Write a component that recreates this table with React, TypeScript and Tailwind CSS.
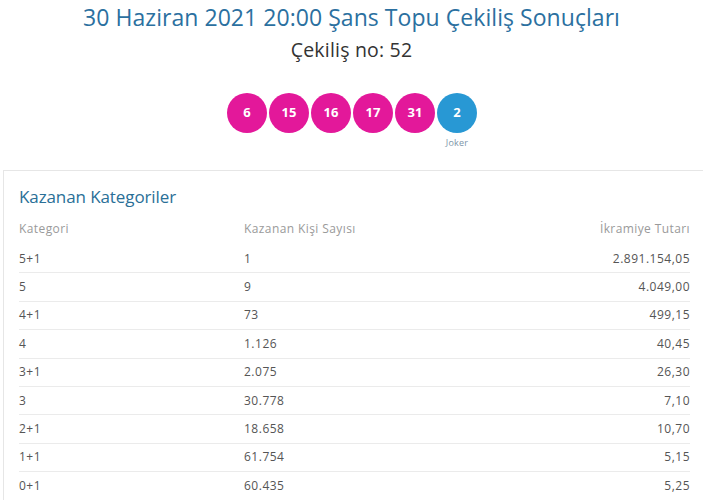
import React from "react";

const rows: [string, string, string][] = [
  ["5+1", "1", "2.891.154,05"],
  ["5", "9", "4.049,00"],
  ["4+1", "73", "499,15"],
  ["4", "1.126", "40,45"],
  ["3+1", "2.075", "26,30"],
  ["3", "30.778", "7,10"],
  ["2+1", "18.658", "10,70"],
  ["1+1", "61.754", "5,15"],
  ["0+1", "60.435", "5,25"],
];

const balls = ["6", "15", "16", "17", "31"];

export default function App() {
  return (
    <div
      className="w-[703px] h-[500px] overflow-hidden bg-white"
      style={{ fontFamily: '"Open Sans", "Noto Sans", sans-serif' }}
    >
      <div className="flex flex-col items-center">
        <h1 className="mt-[2px] text-[23px] leading-[30px] text-[#2b70a0] tracking-[0.05px]">
          30 Haziran 2021 20:00 Şans Topu Çekiliş Sonuçları
        </h1>
        <div className="mt-[4px] text-[19.5px] leading-[28px] text-[#333] tracking-[0.2px]">Çekiliş no: 52</div>
        <div className="mt-[29px] flex gap-[2px] pl-[1px]">
          {balls.map((b) => (
            <div key={b} className="flex flex-col items-center">
              <div className="w-[40px] h-[40px] rounded-full bg-[#e3189a] text-white font-bold text-[13px] flex items-center justify-center">
                {b}
              </div>
            </div>
          ))}
          <div className="flex flex-col items-center">
            <div className="w-[40px] h-[40px] rounded-full bg-[#2898d4] text-white font-bold text-[13px] flex items-center justify-center">
              2
            </div>
            <div className="mt-[4px] text-[9px] leading-[12px] text-[#7c95a8] tracking-[0.2px]">Joker</div>
          </div>
        </div>
      </div>
      <div className="mt-[21px] ml-[3px] border-l border-t border-[#e6e6e6] pl-[15px] pr-[13px] pt-[14px]">
        <div className="text-[17px] leading-[24px] text-[#2a6f97] tracking-[-0.1px]">Kazanan Kategoriler</div>
        <div className="mt-[11px] grid grid-cols-[225px_1fr_auto] text-[12px] leading-[18px] text-[#9a9a9a] pb-[7px] tracking-[0.4px]">
          <div>Kategori</div>
          <div>Kazanan Kişi Sayısı</div>
          <div className="text-right">İkramiye Tutarı</div>
        </div>
        {rows.map((r, i) => (
          <div
            key={r[0]}
            className={
              "grid grid-cols-[225px_1fr_auto] h-[28.4px] items-center text-[12px] text-[#555] tracking-[0.5px] " +
              (i < rows.length - 1 ? "border-b border-[#ebebeb]" : "")
            }
          >
            <div>{r[0]}</div>
            <div>{r[1]}</div>
            <div className="text-right">{r[2]}</div>
          </div>
        ))}
      </div>
    </div>
  );
}
